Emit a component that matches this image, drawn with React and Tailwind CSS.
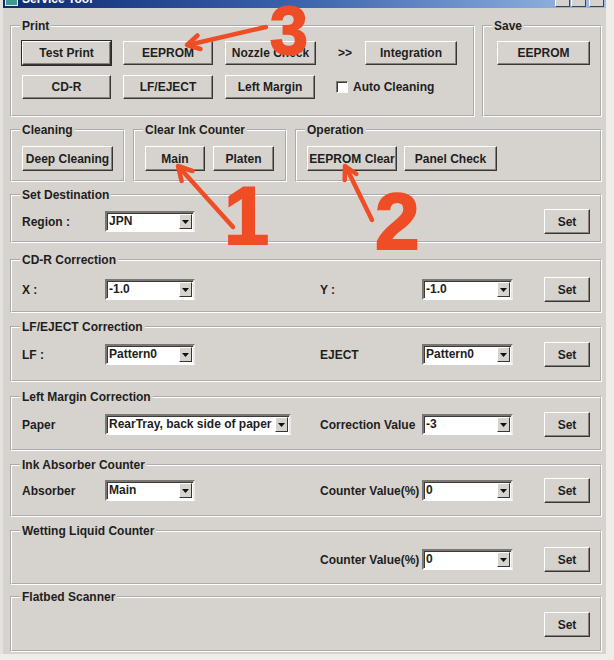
import React from "react";

const FONT = "font-['Liberation_Sans',Arial,sans-serif]";

// classic win98-ish push button
function Btn({ children, className = "", def = false }) {
  return (
    <button
      className={`flex shrink-0 items-center justify-center whitespace-nowrap bg-[#d6d3ce] border border-t-white border-l-white border-r-[#363636] border-b-[#363636] shadow-[inset_-1px_-1px_0_#86837e] text-[12px] font-bold text-[#1e1e1e] ${
        def ? "outline outline-1 outline-[#2a2a2a]" : ""
      } ${className}`}
    >
      {children}
    </button>
  );
}

function Group({ title, className = "", children }) {
  return (
    <fieldset
      className={`border-2 border-white [border-style:groove] px-[10px] ${className}`}
    >
      <legend className="-ml-[2px] px-[2px] text-[12px] font-bold leading-[14px] text-[#1e1e1e]">
        {title}
      </legend>
      {children}
    </fieldset>
  );
}

function Combo({ value, className = "" }) {
  return (
    <div
      className={`flex h-[21px] shrink-0 items-stretch bg-white border-2 border-t-[#7a7772] border-l-[#7a7772] border-b-white border-r-[#ebe9e6] shadow-[inset_1px_1px_0_#3a3a3a] ${className}`}
    >
      <span className="flex-1 overflow-hidden whitespace-nowrap pl-[2px] text-[12px] font-bold leading-[17px] text-[#1e1e1e]">
        {value}
      </span>
      <span className="my-[1px] mr-[1px] flex w-[13px] items-center justify-center bg-[#d6d3ce] border border-t-white border-l-white border-r-[#363636] border-b-[#363636]">
        <svg width="7" height="4" viewBox="0 0 7 4">
          <polygon points="0,0 7,0 3.5,4" fill="#111" />
        </svg>
      </span>
    </div>
  );
}

function Label({ children, className = "" }) {
  return (
    <span className={`shrink-0 whitespace-nowrap text-[12px] font-bold text-[#1e1e1e] ${className}`}>
      {children}
    </span>
  );
}

// one full-width correction row: left label/combo, right label/combo, Set
function Row({ title, className = "", pad = "pt-[8px]", left, right }) {
  return (
    <Group title={title} className={`w-[592px] ${className}`}>
      <div className={`flex items-center ${pad}`}>
        <div className="flex w-[298px] shrink-0 items-center">
          {left && (
            <>
              <Label className="w-[83px]">{left.label}</Label>
              <Combo value={left.value} className={left.wide ? "w-[186px]" : "w-[90px]"} />
            </>
          )}
        </div>
        <div className="flex items-center">
          {right && (
            <>
              <Label className="w-[102px]">{right.label}</Label>
              <Combo value={right.value} className="w-[91px]" />
            </>
          )}
        </div>
        <Btn className="ml-auto w-[46px] h-[25px]">Set</Btn>
      </div>
    </Group>
  );
}

export default function App() {
  return (
    <div className={`relative h-[660px] w-[614px] overflow-hidden bg-[#eeedea] ${FONT}`}>
      <div className="h-[654px] w-[606px] border-l-[3px] border-[#e4e2de] bg-[#d6d3ce]">
        {/* title bar, mostly cut off */}
        <div className="flex h-[8px] items-end overflow-hidden bg-linear-to-r from-[#0c2a72] via-[#3d64ad] to-[#9dbde6]">
          <div className="flex h-[18px] flex-1 items-center gap-[4px] pl-[2px]">
            <div className="h-[13px] w-[13px] bg-[#3f9a8c] border border-[#d9efe9]" />
            <span className="text-[12px] font-bold text-white">Service Tool</span>
            <div className="ml-auto flex gap-[1px] pr-[2px]">
              <div className="h-[15px] w-[15px] bg-[#d6d3ce] border border-white border-r-[#444] border-b-[#444]" />
              <div className="h-[15px] w-[15px] bg-[#d6d3ce] border border-white border-r-[#444] border-b-[#444]" />
              <div className="ml-[2px] h-[15px] w-[15px] bg-[#d6d3ce] border border-white border-r-[#444] border-b-[#444]" />
            </div>
          </div>
        </div>

        <div className="ml-[7px] flex w-[592px] flex-col">
          {/* Print / Save */}
          <div className="mt-[11px] flex gap-[7px]">
            <Group title="Print" className="h-[98px] w-[465px]">
              <div className="flex flex-col gap-[10px] pt-[8px]">
                <div className="flex items-center">
                  <Btn def className="w-[89px] h-[24px]">Test Print</Btn>
                  <Btn className="ml-[12px] w-[90px] h-[24px]">EEPROM</Btn>
                  <Btn className="ml-[12px] w-[91px] h-[24px]">Nozzle Check</Btn>
                  <span className="ml-[22px] w-[27px] text-[12px] font-bold text-[#1e1e1e]">&gt;&gt;</span>
                  <Btn className="w-[92px] h-[24px]">Integration</Btn>
                </div>
                <div className="flex items-center">
                  <Btn className="w-[89px] h-[24px]">CD-R</Btn>
                  <Btn className="ml-[12px] w-[90px] h-[24px]">LF/EJECT</Btn>
                  <Btn className="ml-[12px] w-[90px] h-[24px]">Left Margin</Btn>
                  <span className="ml-[21px] h-[12px] w-[12px] bg-white border border-t-[#7a7772] border-l-[#7a7772] border-b-white border-r-white shadow-[inset_1px_1px_0_#3a3a3a]" />
                  <Label className="ml-[5px]">Auto Cleaning</Label>
                </div>
              </div>
            </Group>
            <Group title="Save" className="h-[98px] flex-1">
              <div className="pt-[8px] pl-[3px]">
                <Btn className="w-[93px] h-[24px]">EEPROM</Btn>
              </div>
            </Group>
          </div>

          {/* Cleaning / Clear Ink Counter / Operation */}
          <div className="mt-[6px] flex gap-[8px]">
            <Group title="Cleaning" className="h-[59px] w-[113px]">
              <div className="pt-[9px]">
                <Btn className="w-[91px] h-[25px]">Deep Cleaning</Btn>
              </div>
            </Group>
            <Group title="Clear Ink Counter" className="h-[59px] w-[154px]">
              <div className="flex gap-[8px] pt-[9px]">
                <Btn className="w-[60px] h-[25px]">Main</Btn>
                <Btn className="w-[61px] h-[25px]">Platen</Btn>
              </div>
            </Group>
            <Group title="Operation" className="h-[59px] flex-1">
              <div className="flex gap-[7px] pt-[9px]">
                <Btn className="w-[90px] h-[25px]">EEPROM Clear</Btn>
                <Btn className="w-[93px] h-[25px]">Panel Check</Btn>
              </div>
            </Group>
          </div>

          <Row title="Set Destination" className="mt-[6px] h-[55px]" pad="pt-[7px]" left={{ label: "Region :", value: "JPN" }} />
          <Row
            title="CD-R Correction"
            className="mt-[10px] h-[60px]"
            pad="pt-[10px]"
            left={{ label: "X :", value: "-1.0" }}
            right={{ label: "Y :", value: "-1.0" }}
          />
          <Row
            title="LF/EJECT Correction"
            className="mt-[7px] h-[62px]"
            left={{ label: "LF :", value: "Pattern0" }}
            right={{ label: "EJECT", value: "Pattern0" }}
          />
          <Row
            title="Left Margin Correction"
            className="mt-[8px] h-[61px]"
            left={{ label: "Paper", value: "RearTray, back side of paper", wide: true }}
            right={{ label: "Correction Value", value: "-3" }}
          />
          <Row
            title="Ink Absorber Counter"
            className="mt-[7px] h-[59px]"
            pad="pt-[6px]"
            left={{ label: "Absorber", value: "Main" }}
            right={{ label: "Counter Value(%)", value: "0" }}
          />
          <Row
            title="Wetting Liquid Counter"
            className="mt-[7px] h-[61px]"
            pad="pt-[9px]"
            right={{ label: "Counter Value(%)", value: "0" }}
          />
          <Row title="Flatbed Scanner" className="mt-[5px] h-[62px]" />
        </div>
      </div>

      {/* red annotations drawn on top of the screenshot */}
      <svg
        className="pointer-events-none absolute left-0 top-0"
        width="614"
        height="660"
        viewBox="0 0 614 660"
      >
        <g stroke="#ee4d26" strokeWidth="4.5" strokeLinecap="round" strokeLinejoin="round" fill="none">
          <line x1="266" y1="27" x2="188" y2="45" />
          <polyline points="200.5,49 187,45 197.5,35.5" />
          <line x1="233" y1="227" x2="179" y2="167" />
          <polyline points="181.6,181 178,166 192.5,171" />
          <line x1="372" y1="220" x2="346" y2="167" />
          <polyline points="344.7,180 345,166 356.4,174" />
        </g>
      </svg>
      <span className="pointer-events-none absolute left-[270px] top-[-4px] text-[68px] font-bold leading-none text-[#ee4d26] [-webkit-text-stroke:2px_#ee4d26]">
        3
      </span>
      <span className="pointer-events-none absolute left-[224px] top-[176px] text-[81px] font-bold leading-none text-[#ee4d26] [-webkit-text-stroke:2px_#ee4d26]">
        1
      </span>
      <span className="pointer-events-none absolute left-[375px] top-[182px] text-[80px] font-bold leading-none text-[#ee4d26] [-webkit-text-stroke:2px_#ee4d26]">
        2
      </span>
    </div>
  );
}
